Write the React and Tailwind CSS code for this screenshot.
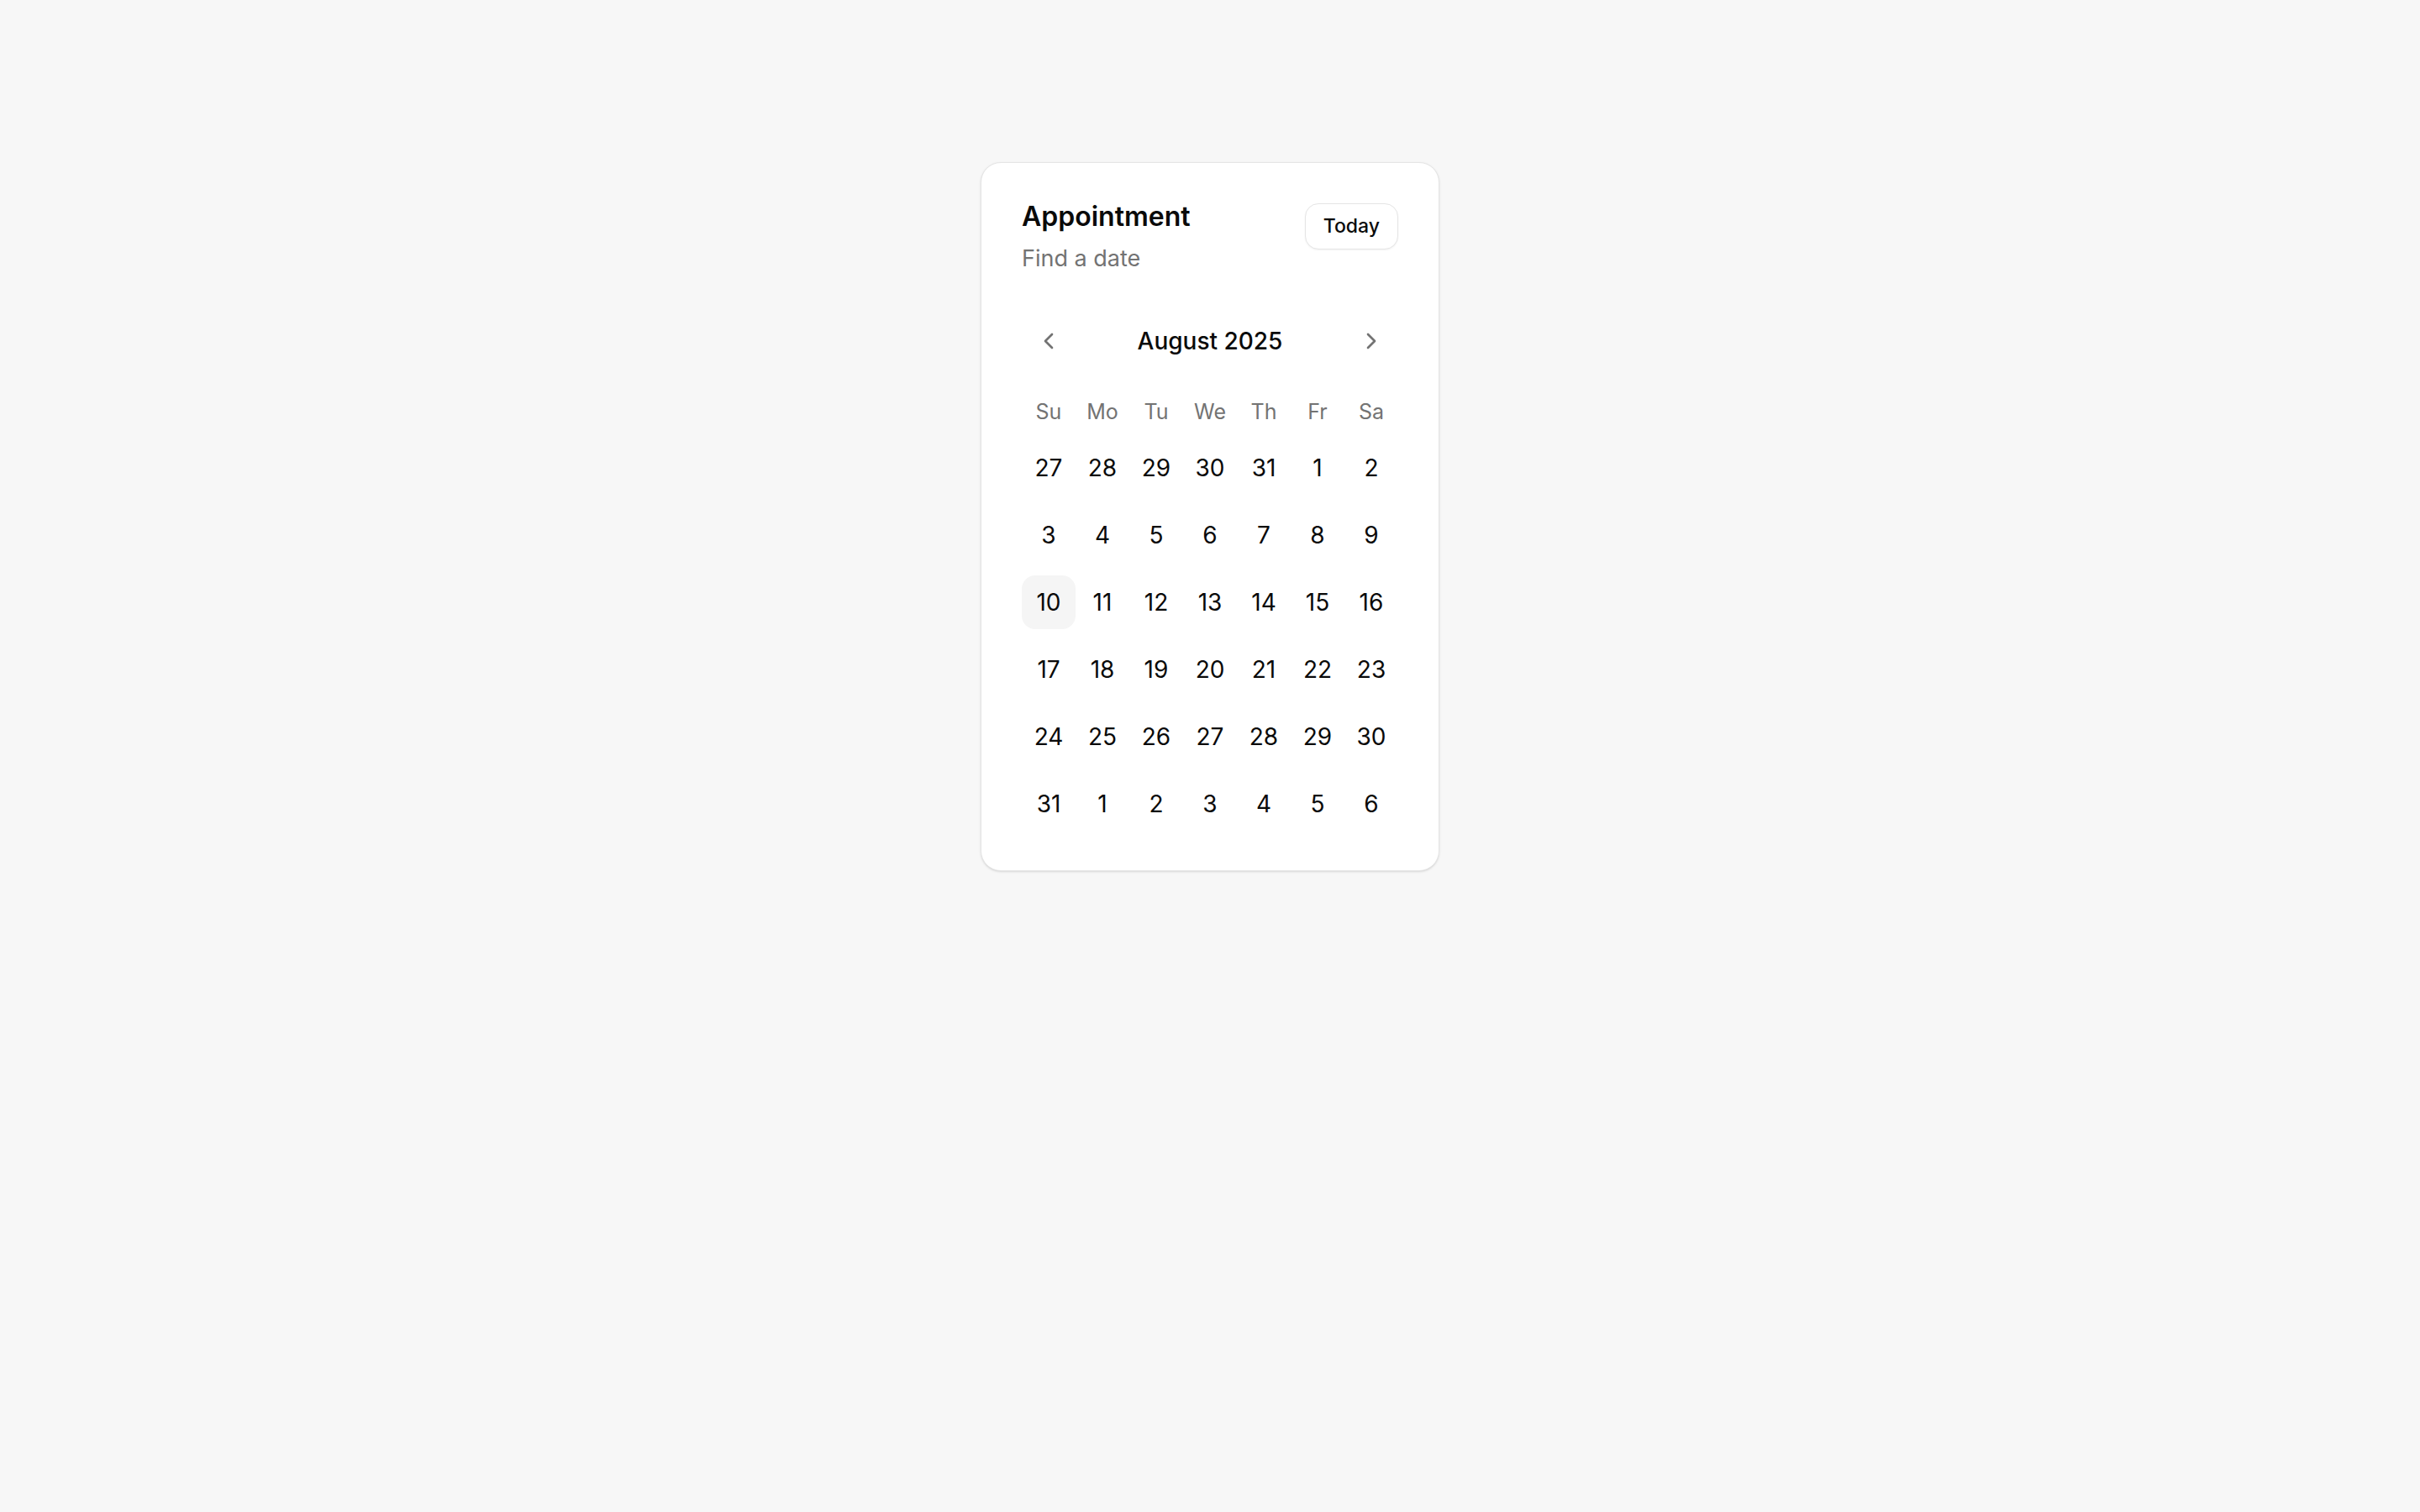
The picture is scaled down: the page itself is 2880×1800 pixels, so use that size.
import React from "react";
import { ChevronLeft, ChevronRight } from "lucide-react";

const weekdays = ["Su", "Mo", "Tu", "We", "Th", "Fr", "Sa"];

const weeks = [
  [27, 28, 29, 30, 31, 1, 2],
  [3, 4, 5, 6, 7, 8, 9],
  [10, 11, 12, 13, 14, 15, 16],
  [17, 18, 19, 20, 21, 22, 23],
  [24, 25, 26, 27, 28, 29, 30],
  [31, 1, 2, 3, 4, 5, 6],
];

const Calendar = () => {
  return (
    <div className="mt-[46px]">
      <div className="flex h-16 items-center justify-between">
        <button className="flex h-16 w-16 items-center justify-center text-[#737373]">
          <ChevronLeft size={32} strokeWidth={2} />
        </button>
        <p className="text-[28px] font-medium text-[#0a0a0a]">August 2025</p>
        <button className="flex h-16 w-16 items-center justify-center text-[#737373]">
          <ChevronRight size={32} strokeWidth={2} />
        </button>
      </div>

      <div className="mt-[33px] grid h-[38px] grid-cols-7 items-center">
        {weekdays.map((day) => (
          <span key={day} className="text-center text-[25px] leading-[38px] text-[#737373]">
            {day}
          </span>
        ))}
      </div>

      <div className="mt-4 flex flex-col gap-4">
        {weeks.map((week, i) => (
          <div key={i} className="grid grid-cols-7">
            {week.map((d, j) => {
              const isToday = i === 2 && j === 0;
              return (
                <div
                  key={j}
                  className={
                    isToday
                      ? "flex h-16 w-16 items-center justify-center rounded-[16px] bg-[#f5f5f5] text-[28px] text-[#0a0a0a]"
                      : "flex h-16 w-16 items-center justify-center rounded-[16px] text-[28px] text-[#0a0a0a]"
                  }
                >
                  {d}
                </div>
              );
            })}
          </div>
        ))}
      </div>
    </div>
  );
};

export default function App() {
  return (
    <div
      className="flex min-h-screen justify-center bg-[#f7f7f7] pt-[193px]"
      style={{ fontFamily: "Inter, 'Noto Sans', sans-serif" }}
    >
      <div className="h-fit w-[546px] rounded-[24px] border border-[#e5e5e5] bg-white px-12 pt-12 pb-[47px] shadow-sm">
        <div className="flex items-start justify-between">
          <div>
            <h2 className="text-[32px] font-semibold leading-none text-[#0a0a0a]">Appointment</h2>
            <p className="mt-[14px] text-[27px] leading-[40px] text-[#737373]">Find a date</p>
          </div>
          <button className="h-[55px] rounded-[16px] border border-[#e5e5e5] bg-white px-[21px] text-[23px] font-medium text-[#0a0a0a] shadow-xs">
            Today
          </button>
        </div>
        <Calendar />
      </div>
    </div>
  );
}
